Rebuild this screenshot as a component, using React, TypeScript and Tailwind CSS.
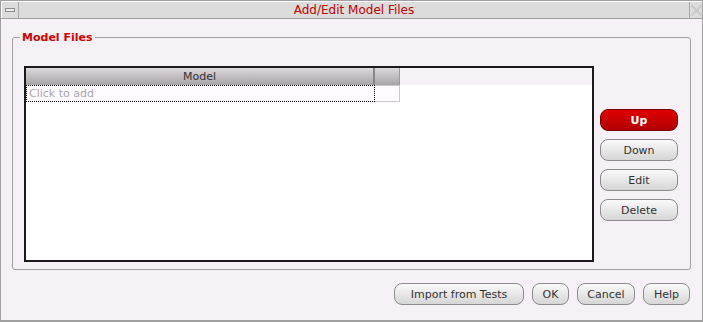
import React from "react";

const font = { fontFamily: '"DejaVu Sans", Verdana, sans-serif' };

function Btn({ label, red, className = "" }: { label: string; red?: boolean; className?: string }) {
  return (
    <button
      className={`h-[22px] rounded-[8px] border text-[11px] leading-none flex items-center justify-center ${
        red
          ? "border-[#7a0000] bg-gradient-to-b from-[#e00000] to-[#b00000] text-white font-bold"
          : "border-[#8c8c8c] bg-gradient-to-b from-[#fafafa] to-[#d6d6d6] text-[#333]"
      } ${className}`}
      style={font}
    >
      {label}
    </button>
  );
}

export default function App() {
  return (
    <div className="w-[703px] h-[322px] border border-[#a0a0a0] border-b-[2px] bg-[#f5f1f7] flex flex-col" style={font}>
      {/* title bar */}
      <div className="h-[18px] flex bg-[#dcdcdc] border-b border-[#a0a0a0] border-t border-t-white">
        <div className="w-[18px] flex items-center justify-center border-r border-[#a8a8a8] border-l border-l-white">
          <div className="w-[10px] h-[4px] border border-[#8c8c8c] bg-[#ececec]" />
        </div>
        <div className="flex-1 text-center text-[12px] leading-[16px] text-[#c00000]">Add/Edit Model Files</div>
        <div className="w-[13px] flex items-center justify-center border-l border-[#a8a8a8]">
          <svg width="11" height="11" viewBox="0 0 11 11">
            <path d="M1 1 L10 10 M10 1 L1 10" stroke="#b8b8b8" strokeWidth="2" strokeDasharray="1 1" fill="none" />
          </svg>
        </div>
      </div>

      {/* body */}
      <div className="flex-1 flex flex-col px-[11px] pt-[12px]">
        <fieldset className="border border-[#a0a0a0] rounded-[3px] h-[239px] px-[11px] pb-[7px] flex flex-col">
          <legend className="-ml-[4px] px-[2px] text-[11px] font-bold text-[#d00000] leading-[13px]">Model Files</legend>
          <div className="flex gap-[6px] mt-[22px]">
            {/* table */}
            <div className="w-[570px] h-[196px] border-2 border-[#1a1a1a] bg-white flex flex-col">
              <div className="flex h-[17px] bg-[#f5f1f7]">
                <div className="w-[349px] bg-gradient-to-b from-[#dcd8dc] to-[#a8a4a8] border-r-2 border-[#888] text-[11px] leading-[17px] text-[#333] text-center">
                  Model
                </div>
                <div className="w-[25px] bg-gradient-to-b from-[#dcd8dc] to-[#a8a4a8] border-r border-[#999]" />
              </div>
              <div className="flex h-[17px]">
                <div className="w-[349px] border border-dotted border-black bg-[#fffbff] text-[11px] leading-[15px] text-[#a8a8a8] pl-[2px]">
                  Click to add
                </div>
                <div className="w-[25px] border border-[#c8c8c8] border-l-0 bg-[#fffbff]" />
              </div>
            </div>
            {/* side buttons */}
            <div className="flex flex-col gap-[8px] pt-[43px]">
              <Btn label="Up" red className="w-[78px]" />
              <Btn label="Down" className="w-[78px]" />
              <Btn label="Edit" className="w-[78px]" />
              <Btn label="Delete" className="w-[78px]" />
            </div>
          </div>
        </fieldset>

        <div className="flex justify-end gap-[8px] mt-[13px] pr-[1px]">
          <Btn label="Import from Tests" className="w-[130px]" />
          <Btn label="OK" className="w-[37px]" />
          <Btn label="Cancel" className="w-[58px]" />
          <Btn label="Help" className="w-[47px]" />
        </div>
      </div>
    </div>
  );
}
